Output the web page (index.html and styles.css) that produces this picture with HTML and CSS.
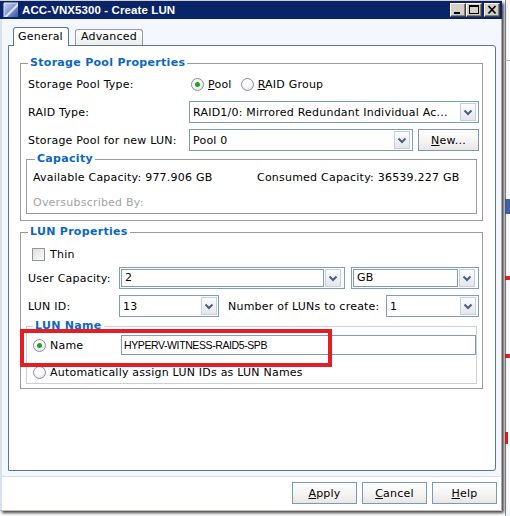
FILE: index.html
```html
<!DOCTYPE html>
<html>
<head>
<meta charset="utf-8">
<title>Create LUN</title>
<link rel="stylesheet" href="styles.css">
</head>
<body>
<div class="screen">
  <div class="dialog">
    <div class="titlebar">
      <svg class="appicon" width="16" height="16" viewBox="0 0 16 16">
        <defs>
          <linearGradient id="ig" x1="0" y1="0" x2="1" y2="1">
            <stop offset="0" stop-color="#c9d6f2"/>
            <stop offset="1" stop-color="#3a55a8"/>
          </linearGradient>
        </defs>
        <rect x="1" y="1" width="14" height="14" fill="url(#ig)"/>
        <path d="M1 15 L15 1 L15 4 L4 15 Z" fill="#eef2fb" opacity="0.85"/>
        <path d="M1 15 L1 1 L15 1" fill="none" stroke="#e6ecf8" stroke-width="1"/>
      </svg>
      <span class="title">ACC-VNX5300 - Create LUN</span>
      <div class="wbtns">
        <span class="wbtn"><svg width="14" height="12" viewBox="0 0 14 12"><rect x="3" y="8" width="6" height="2" fill="#000"/></svg></span>
        <span class="wbtn"><svg width="14" height="12" viewBox="0 0 14 12"><rect x="2.5" y="1.5" width="9" height="8" fill="none" stroke="#000"/><rect x="2" y="1" width="10" height="2" fill="#000"/></svg></span>
        <span class="wbtn wclose"><svg width="14" height="12" viewBox="0 0 14 12"><path d="M3.5 2 L10.5 9.5 M10.5 2 L3.5 9.5" stroke="#000" stroke-width="1.7"/></svg></span>
      </div>
    </div>

    <div class="client">
      <div class="tabs">
        <span class="tab active">General</span>
        <span class="tab">Advanced</span>
      </div>
      <div class="panel">
        <fieldset class="group g-storage">
          <legend>Storage Pool Properties</legend>
          <div class="row">
            <span class="lbl lbl-sp">Storage Pool Type:</span>
            <span class="radio on"></span><span class="rtext"><u>P</u>ool</span>
            <span class="radio r2"></span><span class="rtext"><u>R</u>AID Group</span>
          </div>
          <div class="row gap6">
            <span class="lbl lbl-sp">RAID Type:</span>
            <div class="combo c-raid"><span class="val">RAID1/0: Mirrored Redundant Individual Ac...</span><span class="dd"><svg width="14" height="16" viewBox="0 0 14 16"><path d="M3.5 6.5 L7 10 L10.5 6.5" fill="none" stroke="#4a5e83" stroke-width="2"/></svg></span></div>
          </div>
          <div class="row gap6">
            <span class="lbl lbl-sp">Storage Pool for new LUN:</span>
            <div class="combo c-pool"><span class="val">Pool 0</span><span class="dd"><svg width="14" height="16" viewBox="0 0 14 16"><path d="M3.5 6.5 L7 10 L10.5 6.5" fill="none" stroke="#4a5e83" stroke-width="2"/></svg></span></div>
            <span class="btn b-new"><u>N</u>ew...</span>
          </div>
          <fieldset class="group g-cap">
            <legend>Capacity</legend>
            <div class="crow">
              <span class="ccol">Available Capacity: 977.906 GB</span>
              <span>Consumed Capacity: 36539.227 GB</span>
            </div>
            <div class="crow crow2 dim">Oversubscribed By:</div>
          </fieldset>
        </fieldset>

        <fieldset class="group g-lun">
          <legend>LUN Properties</legend>
          <div class="row">
            <span class="check"></span><span class="rtext">Thin</span>
          </div>
          <div class="row gap2">
            <span class="lbl lbl-lun">User Capacity:</span>
            <div class="ecombo e-cap"><span class="field">2</span><span class="dd"><svg width="14" height="16" viewBox="0 0 14 16"><path d="M3.5 6.5 L7 10 L10.5 6.5" fill="none" stroke="#4a5e83" stroke-width="2"/></svg></span></div>
            <div class="ecombo e-gb"><span class="field">GB</span><span class="dd"><svg width="14" height="16" viewBox="0 0 14 16"><path d="M3.5 6.5 L7 10 L10.5 6.5" fill="none" stroke="#4a5e83" stroke-width="2"/></svg></span></div>
          </div>
          <div class="row gap6">
            <span class="lbl lbl-lun">LUN ID:</span>
            <div class="combo c-id"><span class="val">13</span><span class="dd"><svg width="14" height="16" viewBox="0 0 14 16"><path d="M3.5 6.5 L7 10 L10.5 6.5" fill="none" stroke="#4a5e83" stroke-width="2"/></svg></span></div>
            <span class="numlbl">Number of LUNs to create:</span>
            <div class="combo c-num"><span class="val">1</span><span class="dd"><svg width="14" height="16" viewBox="0 0 14 16"><path d="M3.5 6.5 L7 10 L10.5 6.5" fill="none" stroke="#4a5e83" stroke-width="2"/></svg></span></div>
          </div>
          <fieldset class="group g-name">
            <legend>LUN Name</legend>
            <div class="row">
              <span class="radio on"></span><span class="rtext nlbl">Name</span>
              <span class="tinput">HYPERV-WITNESS-RAID5-SPB</span>
            </div>
            <div class="row gap5">
              <span class="radio"></span><span class="rtext">Automatically assign LUN IDs as LUN Names</span>
            </div>
          </fieldset>
        </fieldset>
      </div>
    </div>

    <div class="footer">
      <span class="btn b-foot"><u>A</u>pply</span>
      <span class="btn b-foot"><u>C</u>ancel</span>
      <span class="btn b-foot"><u>H</u>elp</span>
    </div>
  </div>

  <div class="strip">
    <span class="mark m-gray m1"></span>
    <span class="mark m-blue m2"></span>
    <span class="mark m-red m3"></span>
    <span class="mark m-red m4"></span>
    <span class="mark m-red m5"></span>
  </div>

  <div class="redbox"></div>
</div>
</body>
</html>
```

FILE: styles.css
```css
* { box-sizing: border-box; }

html, body {
  margin: 0;
  padding: 0;
  background: #ffffff;
}

body {
  font-family: "DejaVu Sans", Verdana, sans-serif;
  font-size: 11px;
  letter-spacing: 0.22px;
  color: #000;
}

.screen {
  position: relative;
  width: 510px;
  height: 516px;
  display: flex;
  align-items: flex-start;
  overflow: hidden;
  background: #ffffff;
}

/* ---------- dialog ---------- */
.dialog {
  position: relative;
  z-index: 1;
  width: 502px;
  height: 510px;
  flex: none;
  display: flex;
  flex-direction: column;
  box-shadow: 0 1px 0 #c4c0b8, 2px 3px 3px rgba(0, 0, 0, 0.75);
}

.titlebar {
  height: 19px;
  flex: none;
  background: #0a246a;
  display: flex;
  align-items: center;
  padding-left: 3px;
  border-top: 1px solid #d4d0c8;
}

.appicon { flex: none; }

.title {
  margin-left: 3px;
  color: #fff;
  font-family: "Liberation Sans", Arial, sans-serif;
  font-weight: bold;
  font-size: 11.5px;
  letter-spacing: 0.1px;
}

.wbtns {
  margin-left: auto;
  display: flex;
  align-items: center;
  padding-right: 2px;
}

.wbtn {
  width: 16px;
  height: 14px;
  display: flex;
  align-items: center;
  justify-content: center;
  background: #d4d0c8;
  border-top: 1px solid #fff;
  border-left: 1px solid #fff;
  border-right: 1px solid #404040;
  border-bottom: 1px solid #404040;
  box-shadow: inset -1px -1px 0 #808080;
}

.wclose { margin-left: 2px; }

.client {
  height: 458px;
  flex: none;
  background: #f5f7fe;
  border-left: 2px solid #d9e1f1;
  border-right: 1px solid #a9a9a9;
  border-bottom: 1px solid #d3dff3;
  padding: 8px 0 0 6px;
}

.tabs {
  height: 18px;
  display: flex;
  align-items: flex-end;
  padding-left: 5px;
  gap: 6px;
}

.tab {
  height: 16px;
  padding: 0 5px;
  line-height: 14px;
  border: 1px solid #9a9a9a;
  border-bottom: none;
  border-radius: 3px 3px 0 0;
  background: linear-gradient(#ffffff, #ececec);
}

.tab.active {
  position: relative;
  z-index: 2;
  height: 19px;
  margin-bottom: -1px;
  padding: 0 5px 0 4px;
  line-height: 17px;
  background: #fff;
  border-color: #5b7592;
}

.panel {
  position: relative;
  width: 488px;
  height: 426px;
  background: #fff;
  border: 1px solid #5b7592;
  border-radius: 0 3px 3px 0;
  padding: 10px 12px 0 11px;
}

/* ---------- groups ---------- */
.group {
  margin: 0;
  min-width: 0;
  border: 1px solid #9a9a9a;
}

.group legend {
  padding: 0 2px;
  margin-left: 2px;
  color: #0b67c4;
  font-weight: bold;
  font-size: 11px;
  letter-spacing: 0.3px;
  line-height: 14px;
}

.g-storage {
  width: 463px;
  padding: 3px 3px 6px 5px;
}

.g-cap {
  margin: 1px 2px 0 0;
  padding: 5px 0 3px 6px;
}

.g-lun {
  width: 463px;
  margin-top: 4px;
  padding: 4px 3px 4px 5px;
}

.g-name {
  margin: 2px 2px 0 0;
  padding: 1px 1px 0 4px;
  border-color: #cfcfcf;
}

.row {
  display: flex;
  align-items: center;
  height: 22px;
}

.gap2 { margin-top: 2px; }
.gap5 { margin-top: 5px; }
.gap6 { margin-top: 6px; }

.lbl {
  flex: none;
  padding-left: 2px;
  white-space: nowrap;
}

.lbl-sp { width: 163px; }
.lbl-lun { width: 93px; }

.rtext { white-space: nowrap; }

.radio {
  flex: none;
  width: 13px;
  height: 13px;
  margin: 0 4px 0 2px;
  border-radius: 50%;
  border: 1px solid #8a8f98;
  background: radial-gradient(circle at 40% 35%, #ffffff 30%, #dcdcdc 100%);
  position: relative;
}

.radio.on::after {
  content: "";
  position: absolute;
  left: 3px;
  top: 3px;
  width: 5px;
  height: 5px;
  border-radius: 50%;
  background: #21a121;
}

.radio.r2 { margin-left: 9px; }

.check {
  flex: none;
  width: 13px;
  height: 13px;
  margin: 0 5px 0 6px;
  border: 1px solid #8d96a3;
  background: linear-gradient(135deg, #dcdcdc, #ffffff);
}

.crow {
  display: flex;
  line-height: 14px;
  white-space: nowrap;
}

.crow2 { margin-top: 11px; }

.ccol { width: 224px; flex: none; }

.dim { color: #a3a3a3; }

/* ---------- combos ---------- */
.combo {
  flex: none;
  height: 22px;
  display: flex;
  align-items: center;
  border: 1px solid #7f9db9;
  background: #fff;
}

.combo .val {
  flex: 1;
  padding-left: 3px;
  white-space: nowrap;
  overflow: hidden;
}

.dd {
  flex: none;
  width: 16px;
  height: 18px;
  margin-right: 2px;
  display: flex;
  align-items: center;
  justify-content: center;
  border: 1px solid #c3d0e1;
  background: linear-gradient(#fdfdfd, #e3e6eb);
}

.c-raid { width: 290px; }
.c-pool { width: 224px; }
.c-id { width: 100px; }
.c-id .dd { margin-right: 1px; }
.c-num { width: 93px; margin-left: auto; }

.ecombo {
  flex: none;
  height: 22px;
  display: flex;
  align-items: center;
  gap: 1px;
  padding: 1px 2px 1px 1px;
  border: 1px solid #7f9db9;
  background: #fff;
}

.ecombo .field {
  flex: 1;
  height: 100%;
  border: 1px solid #7f9db9;
  padding-left: 3px;
  line-height: 16px;
}

.ecombo .dd { margin-right: 1px; }

.e-cap { width: 226px; }
.e-gb { width: 128px; margin-left: 6px; }

.numlbl {
  margin-left: 9px;
  white-space: nowrap;
}

/* ---------- buttons ---------- */
.btn {
  flex: none;
  height: 22px;
  display: flex;
  align-items: center;
  justify-content: center;
  border: 1px solid #7a98b9;
  background: linear-gradient(#ffffff, #f4f3f1 60%, #e8e6e3);
  white-space: nowrap;
}

.b-new {
  width: 61px;
  margin-left: 5px;
}

.footer {
  height: 33px;
  flex: none;
  background: #fff;
  border-left: 2px solid #d9e1f1;
  border-right: 1px solid #a9a9a9;
  display: flex;
  justify-content: flex-end;
  align-items: flex-start;
  gap: 5px;
  padding: 5px 4px 0 0;
}

.b-foot { width: 65px; }

/* ---------- LUN name ---------- */
.nlbl {
  width: 71px;
  flex: none;
}

.tinput {
  flex: none;
  width: 355px;
  height: 20px;
  border: 1px solid #7f9db9;
  padding-left: 2px;
  line-height: 18px;
  font-family: "Liberation Sans", Arial, sans-serif;
  font-size: 10.5px;
  letter-spacing: -0.4px;
  white-space: nowrap;
}

/* ---------- background window strip ---------- */
.strip {
  flex: 1;
  height: 516px;
  background: #f7f8fb;
  display: flex;
  flex-direction: column;
  border-left: 3px solid #ffffff;
  box-shadow: inset 1px 0 0 #8c8c8c;
}

.mark {
  display: block;
  flex: none;
  width: 100%;
}

.m-gray { height: 1px; background: #b9b9b9; margin-top: 60px; }
.m-blue { height: 15px; background: #3e64ad; margin-top: 138px; }
.m-red { height: 4px; background: #e02020; }
.m3 { margin-top: 62px; }
.m4 { margin-top: 74px; }
.m5 { margin-top: 74px; height: 12px; width: 3px; }

/* ---------- annotation ---------- */
.redbox {
  position: absolute;
  z-index: 5;
  left: 20px;
  top: 329px;
  width: 312px;
  height: 38px;
  border: 4px solid #e41e26;
}
```
